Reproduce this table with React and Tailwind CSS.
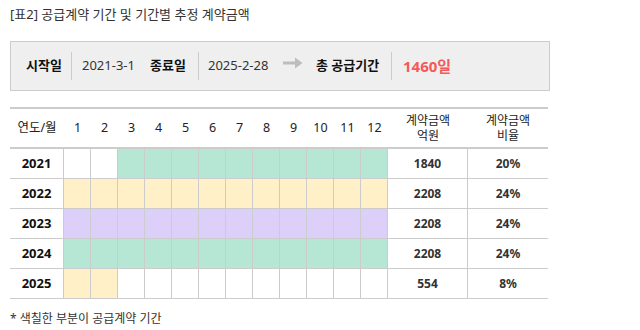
import React from 'react';

const FONT = { fontFamily: '"Noto Sans", "Noto Sans CJK KR", sans-serif' };

const rows = [
  { year: '2021', from: 3, to: 12, color: 'bg-[#b6e6d4]', amount: '1840', ratio: '20%' },
  { year: '2022', from: 1, to: 12, color: 'bg-[#fff0c8]', amount: '2208', ratio: '24%' },
  { year: '2023', from: 1, to: 12, color: 'bg-[#dcd0fb]', amount: '2208', ratio: '24%' },
  { year: '2024', from: 1, to: 12, color: 'bg-[#b6e6d4]', amount: '2208', ratio: '24%' },
  { year: '2025', from: 1, to: 2, color: 'bg-[#fff0c8]', amount: '554', ratio: '8%' },
];

const months = Array.from({ length: 12 }, (_, i) => i + 1);

export default function App() {
  return (
    <div className="w-[640px] h-[330px] bg-white text-[#222] relative" style={FONT}>
      <div className="px-[10px] pt-[4px] text-[13px] leading-[20px] text-[#333]">[표2] 공급계약 기간 및 기간별 추정 계약금액</div>

      {/* Summary box */}
      <div className="ml-[10px] mt-[17px] w-[540px] h-[50px] border border-[#cccccc] bg-[#efefef] flex items-center">
        <div className="pl-[15px] w-[60px] text-[13px] font-bold text-[#111]">시작일</div>
        <div className="w-px h-[28px] bg-[#cccccc]" />
        <div className="pl-[10px] w-[78px] text-[13px] text-[#333]">2021-3-1</div>
        <div className="w-[48px] text-[13px] font-bold text-[#111]">종료일</div>
        <div className="w-px h-[28px] bg-[#cccccc]" />
        <div className="pl-[9px] w-[84px] text-[13px] text-[#333]">2025-2-28</div>
        <svg width="20" height="12" viewBox="0 0 20 12" className="mb-[6px]">
          <path d="M0 4.5 H12 V0.5 L19.5 6 L12 11.5 V7.5 H0 Z" fill="#bdbdbd" />
        </svg>
        <div className="pl-[13px] w-[88px] text-[13px] font-bold text-[#111]">총 공급기간</div>
        <div className="w-px h-[28px] bg-[#cccccc]" />
        <div className="pl-[11px] text-[15px] font-bold text-[#f45a5a]">1460일</div>
      </div>

      {/* Table */}
      <div className="ml-[10px] mt-[16px] w-[538px] border-t-2 border-[#cccccc]">
        <div className="flex h-[40px] items-center border-b-2 border-[#cccccc] text-[12.5px] text-[#222]">
          <div className="w-[54px] text-center">연도/월</div>
          {months.map((m) => (
            <div key={m} className="w-[27px] text-center">{m}</div>
          ))}
          <div className="w-[80px] text-center text-[12px] leading-[15px]">계약금액<br />억원</div>
          <div className="w-[80px] text-center text-[12px] leading-[15px]">계약금액<br />비율</div>
        </div>
        {rows.map((r) => (
          <div key={r.year} className="flex h-[30px] border-b border-[#cccccc]">
            <div className="w-[54px] flex items-center justify-center text-[13px] font-bold text-[#111] border-r border-[#cccccc]">{r.year}</div>
            {months.map((m) => {
              const on = m >= r.from && m <= r.to;
              return <div key={m} className={`w-[27px] border-r border-[#cccccc] ${on ? r.color : 'bg-white'}`} />;
            })}
            <div className="w-[80px] flex items-center justify-center text-[12px] font-bold text-[#333] border-r border-[#cccccc]">{r.amount}</div>
            <div className="w-[80px] flex items-center justify-center text-[12px] font-bold text-[#333]">{r.ratio}</div>
          </div>
        ))}
      </div>

      <div className="px-[10px] mt-[11px] text-[12px] text-[#333]">* 색칠한 부분이 공급계약 기간</div>
    </div>
  );
}
